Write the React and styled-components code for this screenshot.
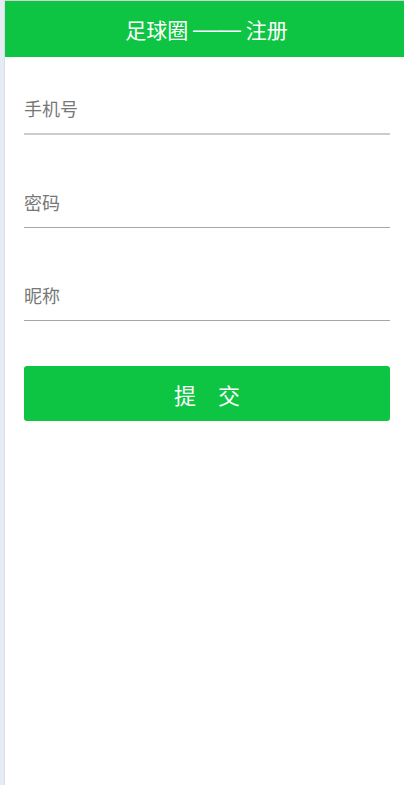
import React, { useState } from 'react';
import styled, { createGlobalStyle } from 'styled-components';

const GREEN = '#0dc543';

const GlobalStyle = createGlobalStyle`
  html, body {
    margin: 0;
    padding: 0;
    background: #fff;
    font-family: 'Noto Sans CJK SC', 'Noto Sans', sans-serif;
  }
`;

// ---------------- Styled Components ----------------
const Shell = styled.div`
  display: flex;
  min-height: 785px;
`;

const SideStrip = styled.div`
  width: 4px;
  background: #e6ecf4;
  border-right: 1px solid #d6dde6;
`;

const Main = styled.div`
  flex: 1;
  border-top: 1px solid #cfd3d6;
`;

const Header = styled.header`
  height: 56px;
  background: ${GREEN};
  color: #fff;
  display: flex;
  align-items: center;
  justify-content: center;
  font-size: 21px;
  padding-left: 4px;
  white-space: pre;
`;

const Dash = styled.span`
  font-family: 'Liberation Sans', Arial, sans-serif;
  font-size: 24px;
  line-height: 1;
`;

const Form = styled.form`
  display: flex;
  flex-direction: column;
  gap: 48px;
  padding: 32px 14px 0 19px;
`;

const Input = styled.input`
  display: block;
  width: 100%;
  box-sizing: border-box;
  height: ${p => (p.$focused ? 46 : 45)}px;
  padding: 0 0 6px;
  border: none;
  border-bottom: ${p => (p.$focused ? '2px solid #cccccc' : '1px solid #a6a6a6')};
  outline: none;
  background: transparent;
  font-family: inherit;
  font-size: 18px;
  color: #333;

  &::placeholder {
    color: #777;
  }
`;

const SubmitButton = styled.button`
  margin-top: -3px;
  height: 55px;
  border: none;
  border-radius: 3px;
  background: ${GREEN};
  color: #fff;
  font-family: inherit;
  font-size: 22px;
  cursor: pointer;
`;

// ---------------- Component ----------------
function App() {
  const [form, setForm] = useState({ phone: '', password: '', nickname: '' });

  return (
    <>
      <GlobalStyle />
      <Shell>
        <SideStrip />
        <Main>
          <Header>足球圈 <Dash>——</Dash> 注册</Header>
          <Form onSubmit={e => e.preventDefault()}>
            <Input $focused placeholder="手机号" value={form.phone}
              onChange={e => setForm({ ...form, phone: e.target.value })} />
            <Input type="password" placeholder="密码" value={form.password}
              onChange={e => setForm({ ...form, password: e.target.value })} />
            <Input placeholder="昵称" value={form.nickname}
              onChange={e => setForm({ ...form, nickname: e.target.value })} />
            <SubmitButton type="submit">提　交</SubmitButton>
          </Form>
        </Main>
      </Shell>
    </>
  );
}

export default App;
